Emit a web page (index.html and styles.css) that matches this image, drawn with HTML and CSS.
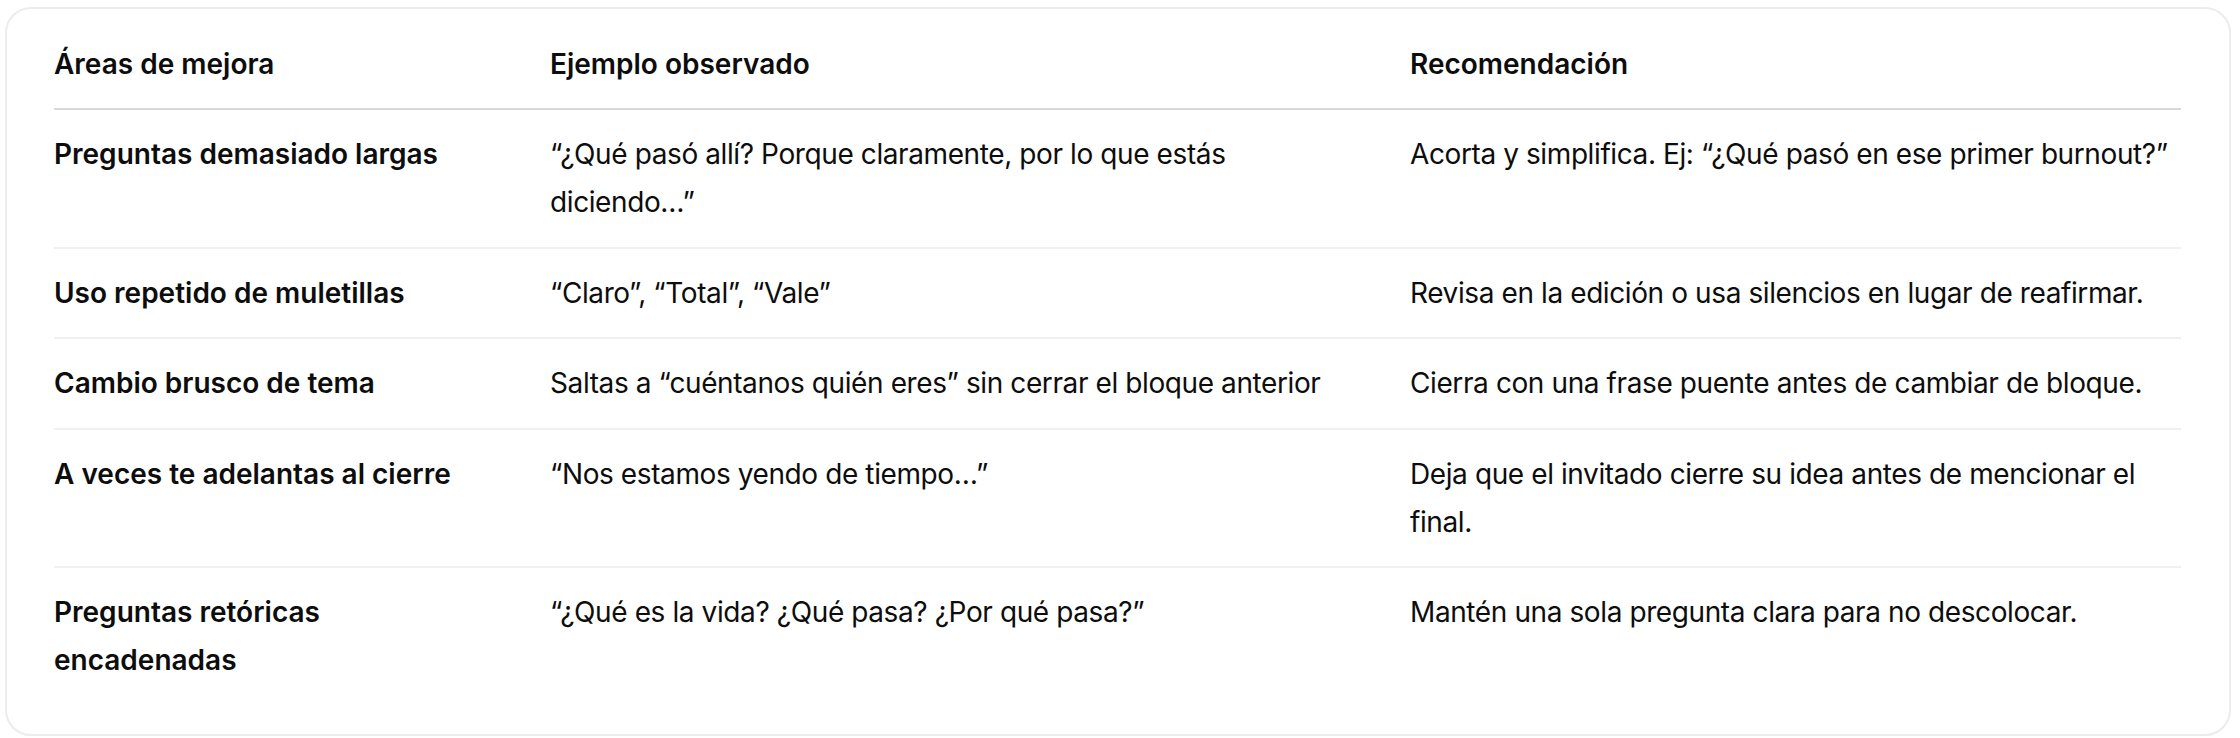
FILE: index.html
```html
<!DOCTYPE html>
<html lang="es">
<head>
<meta charset="utf-8">
<title>Áreas de mejora</title>
<link rel="stylesheet" href="styles.css">
</head>
<body>
<div class="page">
  <div class="card">
    <table class="tbl">
      <colgroup>
        <col class="c1">
        <col class="c2">
        <col class="c3">
      </colgroup>
      <thead>
        <tr>
          <th>Áreas de mejora</th>
          <th>Ejemplo observado</th>
          <th>Recomendación</th>
        </tr>
      </thead>
      <tbody>
        <tr>
          <td class="key">Preguntas demasiado largas</td>
          <td>“¿Qué pasó allí? Porque claramente, por lo que estás diciendo…”</td>
          <td>Acorta y simplifica. Ej: “¿Qué pasó en ese primer burnout?”</td>
        </tr>
        <tr>
          <td class="key">Uso repetido de muletillas</td>
          <td>“Claro”, “Total”, “Vale”</td>
          <td>Revisa en la edición o usa silencios en lugar de reafirmar.</td>
        </tr>
        <tr>
          <td class="key">Cambio brusco de tema</td>
          <td>Saltas a “cuéntanos quién eres” sin cerrar el bloque anterior</td>
          <td>Cierra con una frase puente antes de cambiar de bloque.</td>
        </tr>
        <tr>
          <td class="key">A veces te adelantas al cierre</td>
          <td>“Nos estamos yendo de tiempo…”</td>
          <td>Deja que el invitado cierre su idea antes de mencionar el final.</td>
        </tr>
        <tr>
          <td class="key">Preguntas retóricas encadenadas</td>
          <td>“¿Qué es la vida? ¿Qué pasa? ¿Por qué pasa?”</td>
          <td>Mantén una sola pregunta clara para no descolocar.</td>
        </tr>
      </tbody>
    </table>
  </div>
</div>
</body>
</html>
```

FILE: styles.css
```css
html, body {
  margin: 0;
  padding: 0;
  background: #ffffff;
}

body {
  font-family: Inter, "Noto Sans", "Liberation Sans", sans-serif;
  color: #0d0d0d;
  font-size: 28px;
  line-height: 48px;
}

.page {
  padding: 7px 9px 7px 5px;
}

.card {
  border: 2px solid #ececec;
  border-radius: 26px;
  padding: 11px 48px 29px 47px;
}

.tbl {
  width: 100%;
  border-collapse: collapse;
  table-layout: fixed;
}

.c1 { width: 496px; }
.c2 { width: 860px; }
.c3 { width: auto; }

.tbl th {
  text-align: left;
  font-weight: 600;
  padding: 20px 50px 20px 0;
  border-bottom: 2px solid #d9d9d9;
  vertical-align: top;
}

.tbl td {
  padding: 20px 50px 20.5px 0;
  vertical-align: top;
  border-bottom: 2px solid #f0f0f0;
  letter-spacing: -0.4px;
}

.tbl th:last-child,
.tbl td:last-child {
  padding-right: 0;
}

.tbl tbody tr:last-child td {
  border-bottom: none;
}

.tbl td.key {
  font-weight: 600;
  letter-spacing: 0;
}
```
